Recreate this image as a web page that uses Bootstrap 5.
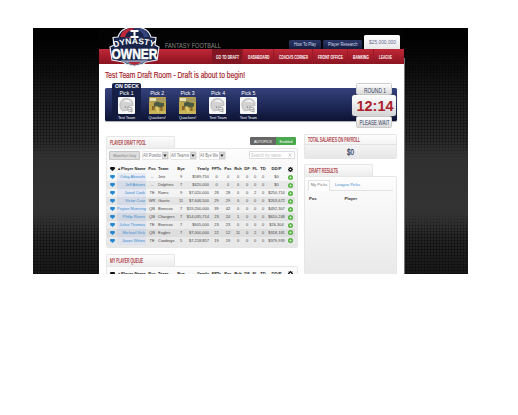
<!DOCTYPE html>
<html lang="en">
<head>
<meta charset="utf-8">
<title>Dynasty Owner - Draft Room</title>
<link href="https://cdn.jsdelivr.net/npm/bootstrap@5.3.0/dist/css/bootstrap.min.css" rel="stylesheet">
<style>
body{background:#fff;font-family:"Liberation Sans",Arial,sans-serif;font-size:4px;line-height:1;color:#444;overflow:hidden}
svg{display:block;overflow:visible}
svg text{font-family:"Liberation Sans",Arial,sans-serif}
.stage{position:relative;width:435px;height:246px;margin:28px 0 0 33px;padding:0 64px 0 66px;overflow:hidden;
background:radial-gradient(circle at 1.5px 1.5px,rgba(0,0,0,.55) .8px,transparent 1.2px) 0 28px/3px 3px,linear-gradient(#000 0,#040404 20px,#171717 60px,#242424 95px,#323232 140px,#323232 182px,#202020 220px,#191919 246px)}
.glow{position:absolute;left:0;right:0;top:112px;height:95px;background:linear-gradient(transparent,#303030 18px,#333 70px,transparent)}
.room{position:relative;height:246px;background:linear-gradient(transparent 22px,#fff 22px);box-shadow:1px 30px 0 #777}
.masthead{height:22px;background:#030303}
.brand{position:absolute;left:9px;top:-4px;z-index:2}
.tagline{margin:12px 0 0 66px;width:57px}
.toplink{height:9px;background:linear-gradient(#2b3768,#151c3e);border-radius:1.5px 1.5px 0 0;margin-right:2px}
.bank{width:36px;height:14px;background:linear-gradient(#fff,#e9e9e9);border-radius:1.5px 1.5px 0 0;margin-right:4px}
.mainnav{height:15px;background:linear-gradient(#be2938,#a51c2b 50%,#8c1522);padding-left:113px}
.mainnav a{height:15px;color:#fff;border-right:1px solid #9a1928;text-decoration:none}
.mainnav a.active{background:#821724}
.mainnav a:last-child{border:0}
.deck{height:33px;margin:0 7px 0 6px;background:linear-gradient(#35427a,#1e2858 55%,#0d1333);border-radius:1.5px;box-shadow:0 1px 1px #aaa;padding-left:7px;color:#fff}
.pick{width:30.4px;height:38px;margin-top:-5px;padding-top:8px;font-size:5.2px}
.pick small{font-size:3.8px;line-height:4px;margin-top:1.5px}
.pick.first{width:29px;height:37px;margin-right:1px;background:linear-gradient(#18224a,#111a3c);border-radius:2px 2px 0 0;padding-top:1px}
.pick.first .ondeck{margin-bottom:2px}
.thumb{width:17px;height:17px;margin-top:.8px}
.clock{position:absolute;left:253px;top:55px;width:44px}
.plate{width:36px;height:12px;background:linear-gradient(#fff,#dadada);border:.5px solid #ccc;border-radius:1.5px}
.timebox{width:44px;height:21px;background:linear-gradient(#fff,#d5d5d5);border-radius:2.5px;box-shadow:0 0 1px #888;z-index:1}
.boards{padding:13px 0 0 7px}
.pool{width:192px;padding-top:2px}
.side{width:93px;margin-left:6px}
.tabhead{width:69px;height:12px;padding:3.4px 0 0 3px;background:linear-gradient(#fcfcfc,#ededed);border:1px solid #e6e6e6;border-bottom:0;border-radius:2px 2px 0 0}
.panelbox{background:linear-gradient(#fdfdfd,#e7e7e7);border:1px solid #e6e6e6;border-radius:0 2px 2px 2px}
.poolbox{height:100px}
.queuebox{height:30px;padding-top:3px}
.queuetab{margin-top:6px}
.resultstab{margin-top:5px}
.paybox{height:25px}
.resultbox{height:110px}
.toggle{width:46px;height:8px;border-radius:1px;overflow:hidden;margin:1px 2px 0 0;background:linear-gradient(90deg,#666 26px,#49a84e 26px)}
.filters{height:9px;margin:2px 2px 5.5px}
.watch{width:31px;height:9px;background:#dedede;border:1px solid #c4c4c4;border-radius:1px}
.pickfield{height:9px;width:27px;border:1px solid #e6e6e6;background:#fff;border-radius:1px;margin-left:1.7px}
.search{width:46px;height:8px;border:1px solid #ddd;background:#fff;border-radius:1px}
.grid{width:188px;table-layout:fixed;border-collapse:collapse;font-size:4px;line-height:4px;margin:0}
.grid th,.grid td{padding:0;height:7.95px;text-align:center;white-space:nowrap;vertical-align:middle}
.grid th{color:#222;font-size:4.1px}
.grid tbody tr:nth-child(even){background:rgba(0,0,0,.05)}
.grid td:nth-child(2){color:#3c8ccd;background:rgba(205,218,245,.4)}
.grid tbody tr:nth-child(even) td:nth-child(2){background:rgba(190,203,230,.45)}
.grid .r{text-align:right;padding-right:1px}
.grid .l{text-align:left}
.grid svg{margin:auto}
.payhead{height:10px;padding:1.6px 0 0 2.5px;border-bottom:1px solid #e2e2e2}
.minitabs{height:11px;margin:3px 3px 0;border-bottom:1px solid #e2e2e2;font-size:4.2px}
.minitabs .on{width:22px;height:11px;border:1px solid #e2e2e2;border-bottom:0;background:#fff;color:#777;border-radius:1px 1px 0 0}
.minitabs .off{margin-left:5px;color:#3c8ccd}
.picklist{padding:5.5px 0 0 4px;font-size:4.2px;color:#333}
.picklist .pos{width:35.5px}
</style>
</head>
<body>
<svg width="0" height="0" class="position-absolute">
<defs>
<symbol id="helmet" viewBox="0 0 17 17"><rect width="17" height="17" rx="1" fill="#f8f8f8"/><path d="M2 9C1 4.500 5 1 9 1.500c4.300.3 6.500 3.500 6 7L10 9.500l-.5 3.500L4.500 14Q2 12 2 9Z" fill="#d2d2d2" stroke="#9a9a9a" stroke-width=".5"/><path d="M5 5q2-2.500 5-2 2.500.5 3 3-4-2-8-1Z" fill="#f4f4f4"/><path d="M9.500 10l4.500 1v4l-4.500-1.500M9.500 12l4.500 1" stroke="#888" stroke-width=".7" fill="none"/><circle cx="7.500" cy="10" r=".8" fill="#888"/></symbol>
<symbol id="photo" viewBox="0 0 17 17"><rect width="17" height="17" rx="1" fill="#bfa44a"/><path d="M0 1h17v4H0z" fill="#a79a5c"/><path d="M1 1h6v3H1z" fill="#e5e0b4"/><path d="M5 6l3-1.500 3 1 4 .5v3l-3 2-4-2-3 2z" fill="#4b5a42"/><path d="M3 9h2.500v4H3zM11.500 10h2v4h-2z" fill="#8a6428"/><path d="M0 14h17v3H0z" fill="#c9b65c"/><path d="M6 9l3 2 1 4-2-1z" fill="#e8cf74"/></symbol>
<symbol id="heart" viewBox="0 0 5 4"><path d="M2.500 4L.2 1.900C-.3 1 .3 0 1.300 0h2.400C4.700 0 5.300 1 4.800 1.900Z"/></symbol>
<symbol id="plus" viewBox="0 0 5 5"><circle cx="2.500" cy="2.500" r="2.500" fill="#55b13e"/><path d="M1.300 2.500h2.400M2.500 1.300v2.400" stroke="#e8f7e4" stroke-width=".7"/></symbol>
<symbol id="gear" viewBox="0 0 5 5"><circle cx="2.500" cy="2.500" r="1.500" fill="none" stroke="#111" stroke-width="1.300"/><path d="M2.500 0v1M2.500 4v1M0 2.500h1M4 2.500h1M.7.7l.7.7M3.600 3.600l.7.7M.7 4.300l.7-.7M3.600 1.400l.7-.7" stroke="#111" stroke-width=".8"/></symbol>
<symbol id="drop" viewBox="0 0 6 7"><rect x=".3" y=".3" width="5.400" height="6.400" rx=".5" fill="#ddd" stroke="#aaa" stroke-width=".5"/><path d="M1.400 2.500h3.200L3 5Z" fill="#222"/></symbol>
</defs>
</svg>
<main class="stage">
<div class="glow"></div>
<div class="room d-flex flex-column">
  <svg class="brand" width="53" height="42" viewBox="0 0 53 42">
    <path d="M10 13Q13 3 26.500 3T43 13L48 13.500 47 21l4 2-2 13-11 2-3 2-8.500 2L18 40l-3-2-11-2L2 23l4-2-1-7.500Z" fill="#172348" stroke="#e7e9f0" stroke-width="1.200"/>
    <path d="M12 13Q14 4 26.500 4V14Z" fill="#c02538"/><path d="M26.500 4Q39 4 41 13l-14.500 1Z" fill="#33447e"/>
    <path d="M17 13Q18 7 26.500 5 35 7 36 13Z" fill="#172348"/>
    <path d="M22.500 7h8M22.500 13h8M26.500 7v6" stroke="#fff" stroke-width="2" fill="none"/>
    <path id="arch" d="M6 23.500Q26.500 16.500 47 23.500" fill="none"/>
    <text font-size="8.500" font-weight="700" fill="#fff" textLength="41" lengthAdjust="spacingAndGlyphs"><textPath href="#arch">DYNASTY</textPath></text>
    <text x="3.500" y="34.500" font-size="14" font-weight="700" fill="#fff" stroke="#fff" stroke-width=".5" textLength="46" lengthAdjust="spacingAndGlyphs">OWNER</text>
    <path d="M12 36.200h29l-5 2-2 1-7.500 2-7.500-2-2-1Z" fill="#8f9ab8"/><path d="M20 38h13l-2 1.500-4.500 1.500-4.500-1.500Z" fill="#b22637"/>
  </svg>
  <header class="masthead d-flex align-items-start">
    <div class="tagline"><svg width="57" height="9"><text x="0" y="7.800" font-size="8" fill="#858585" textLength="56" lengthAdjust="spacingAndGlyphs">FANTASY FOOTBALL</text></svg></div>
    <div class="d-flex align-items-end ms-auto align-self-end">
      <div class="toplink d-flex align-items-center"><svg width="32" height="5"><text x="5" y="4.200" font-size="5" fill="#d5daee" textLength="22" lengthAdjust="spacingAndGlyphs">How To Play</text></svg></div>
      <div class="toplink d-flex align-items-center"><svg width="39" height="5"><text x="5" y="4.200" font-size="5" fill="#d5daee" textLength="29.500" lengthAdjust="spacingAndGlyphs">Player Research</text></svg></div>
      <div class="bank d-flex align-items-center"><svg width="36" height="6"><text x="5" y="4.800" font-size="5.400" fill="#60678c" textLength="27" lengthAdjust="spacingAndGlyphs">$25,000,000</text></svg></div>
    </div>
  </header>
  <nav class="mainnav d-flex">
    <a class="active" href="#"><svg width="30" height="15"><text x="4" y="9.500" font-size="4.500" font-weight="700" fill="#fff" textLength="23" lengthAdjust="spacingAndGlyphs">GO TO DRAFT</text></svg></a>
    <a href="#"><svg width="30" height="15"><text x="5" y="9.500" font-size="4.500" font-weight="700" fill="#fff" textLength="21.500" lengthAdjust="spacingAndGlyphs">DASHBOARD</text></svg></a>
    <a href="#"><svg width="38" height="15"><text x="5" y="9.500" font-size="4.500" font-weight="700" fill="#fff" textLength="29" lengthAdjust="spacingAndGlyphs">COACH'S CORNER</text></svg></a>
    <a href="#"><svg width="34" height="15"><text x="5" y="9.500" font-size="4.500" font-weight="700" fill="#fff" textLength="25" lengthAdjust="spacingAndGlyphs">FRONT OFFICE</text></svg></a>
    <a href="#"><svg width="25" height="15"><text x="5" y="9.500" font-size="4.500" font-weight="700" fill="#fff" textLength="16" lengthAdjust="spacingAndGlyphs">BANKING</text></svg></a>
    <a href="#"><svg width="23" height="15"><text x="5" y="9.500" font-size="4.500" font-weight="700" fill="#fff" textLength="13" lengthAdjust="spacingAndGlyphs">LEAGUE</text></svg></a>
  </nav>
  <svg class="flex-shrink-0" width="305" height="24"><text x="6" y="14" font-size="9.800" fill="#a51c2a" stroke="#a51c2a" stroke-width=".2" textLength="140" lengthAdjust="spacingAndGlyphs">Test Team Draft Room - Draft is about to begin!</text></svg>
  <section class="deck d-flex flex-shrink-0">
    <div class="pick first d-flex flex-column align-items-center"><svg class="ondeck" width="24" height="5"><text x="0" y="4.200" font-size="5" font-weight="700" fill="#fff" textLength="24" lengthAdjust="spacingAndGlyphs">ON DECK</text></svg><span>Pick 1</span><svg class="thumb"><use href="#helmet"/></svg><small>Test Team</small></div>
    <div class="pick d-flex flex-column align-items-center"><span>Pick 2</span><svg class="thumb"><use href="#photo"/></svg><small>Quackers!</small></div>
    <div class="pick d-flex flex-column align-items-center"><span>Pick 3</span><svg class="thumb"><use href="#photo"/></svg><small>Quackers!</small></div>
    <div class="pick d-flex flex-column align-items-center"><span>Pick 4</span><svg class="thumb"><use href="#helmet"/></svg><small>Test Team</small></div>
    <div class="pick d-flex flex-column align-items-center"><span>Pick 5</span><svg class="thumb"><use href="#helmet"/></svg><small>Test Team</small></div>
  </section>
  <div class="clock d-flex flex-column align-items-center">
    <div class="plate"><svg width="35" height="12"><text x="7" y="8.700" font-size="7.800" fill="#303b61" textLength="22" lengthAdjust="spacingAndGlyphs">ROUND 1</text></svg></div>
    <div class="timebox"><svg width="44" height="21"><text x="4.500" y="16" font-size="15.500" font-weight="700" fill="#ab1d2c" textLength="37" lengthAdjust="spacingAndGlyphs">12:14</text></svg></div>
    <div class="plate"><svg width="35" height="12"><text x="2.500" y="8.400" font-size="7.800" fill="#303b61" textLength="30" lengthAdjust="spacingAndGlyphs">PLEASE WAIT</text></svg></div>
  </div>
  <div class="boards d-flex">
    <section class="pool">
      <div class="d-flex justify-content-between">
        <div class="tabhead"><svg width="40" height="7"><text x="0" y="5.400" font-size="6.500" fill="#a51c2a" stroke="#a51c2a" stroke-width=".15" textLength="36" lengthAdjust="spacingAndGlyphs">PLAYER DRAFT POOL</text></svg></div>
        <div class="toggle"><svg width="46" height="8"><text x="4" y="5.500" font-size="4.400" fill="#fff" textLength="18" lengthAdjust="spacingAndGlyphs">AUTOPICK</text><text x="29.500" y="5.500" font-size="4.400" fill="#fff" textLength="13" lengthAdjust="spacingAndGlyphs">Enabled</text></svg></div>
      </div>
      <div class="panelbox poolbox">
        <div class="filters d-flex align-items-start">
          <div class="watch"><svg width="29" height="7"><text x="3" y="5" font-size="4.300" fill="#777" textLength="23" lengthAdjust="spacingAndGlyphs">Watchlist Only</text></svg></div>
          <div class="pickfield"><svg width="25" height="7"><text x="0" y="5.100" font-size="4.800" fill="#777" textLength="18" lengthAdjust="spacingAndGlyphs">All Positio</text><use href="#drop" x="19" y="0" width="6" height="7"/></svg></div>
          <div class="pickfield"><svg width="25" height="7"><text x="0" y="5.100" font-size="4.800" fill="#777" textLength="18" lengthAdjust="spacingAndGlyphs">All Teams</text><use href="#drop" x="19" y="0" width="6" height="7"/></svg></div>
          <div class="pickfield"><svg width="25" height="7"><text x="0" y="5.100" font-size="4.800" fill="#777" textLength="18" lengthAdjust="spacingAndGlyphs">All Bye We</text><use href="#drop" x="19" y="0" width="6" height="7"/></svg></div>
          <div class="search ms-auto"><svg width="44" height="6"><text x="1" y="4.600" font-size="4.600" fill="#c2c2c2" textLength="30" lengthAdjust="spacingAndGlyphs">Search by name</text><path d="M38.500 1.500l3 3m0-3l-3 3" stroke="#bbb" stroke-width=".7"/></svg></div>
        </div>
        <table class="grid" id="pool"></table>
      </div>
      <div class="tabhead queuetab"><svg width="40" height="7"><text x="0" y="5.400" font-size="6.500" fill="#a51c2a" stroke="#a51c2a" stroke-width=".15" textLength="33" lengthAdjust="spacingAndGlyphs">MY PLAYER QUEUE</text></svg></div>
      <div class="panelbox queuebox"><table class="grid" id="queue"></table></div>
    </section>
    <aside class="side">
      <div class="panelbox paybox">
        <div class="payhead"><svg width="60" height="7"><text x="0" y="5.400" font-size="6.500" fill="#a51c2a" stroke="#a51c2a" stroke-width=".15" textLength="52" lengthAdjust="spacingAndGlyphs">TOTAL SALARIES ON PAYROLL</text></svg></div>
        <svg width="91" height="12"><text x="42" y="10.300" font-size="9" fill="#303b61" stroke="#303b61" stroke-width=".25" textLength="7" lengthAdjust="spacingAndGlyphs">$0</text></svg>
      </div>
      <div class="tabhead resultstab"><svg width="40" height="7"><text x="1" y="5.400" font-size="6.500" fill="#a51c2a" stroke="#a51c2a" stroke-width=".15" textLength="29" lengthAdjust="spacingAndGlyphs">DRAFT RESULTS</text></svg></div>
      <div class="panelbox resultbox">
        <div class="minitabs d-flex align-items-center"><span class="on d-flex align-items-center justify-content-center">My Picks</span><span class="off">League Picks</span></div>
        <div class="picklist d-flex fw-bold"><span class="pos">Pos</span><span>Player</span></div>
      </div>
    </aside>
  </div>
</div>
</main>
<script src="https://cdn.jsdelivr.net/npm/bootstrap@5.3.0/dist/js/bootstrap.bundle.min.js"></script>
<script>
const widths=[10,29,12,18,10,24,13,10,10,8,8,8,19,9];
const align=['','r','','l','','r','','','','','','','',''];
const icon=(id,w,h,c)=>`<svg width="${w}" height="${h}" fill="${c}"><use href="#${id}"/></svg>`;
const cols='<colgroup>'+widths.map(w=>`<col style="width:${w}px">`).join('')+'</colgroup>';
const row=(cells,tag)=>'<tr>'+cells.map((c,i)=>`<${tag} class="${align[i]}">${c}</${tag}>`).join('')+'</tr>';
const head='<thead>'+row([icon('heart',5,4,'#111'),'▲Player Name','Pos','Team','Bye','Yearly','FPTs','Pas','Rsh','DF','FL','TD','DD/P',icon('gear',5,5,'')],'th')+'</thead>';
const players=[
['Oday Aboushi','--','Jets',9,'$589,750',0,0,0,0,0,0,'$0'],
['Jeff Adams','--','Dolphins',7,'$420,000',0,0,0,0,0,0,'$0'],
['Jared Cook','TE','Rams',9,'$7,020,000',28,28,0,0,2,0,'$250,714'],
['Victor Cruz','WR','Giants',11,'$7,646,500',29,29,0,0,0,0,'$263,672'],
['Peyton Manning','QB','Broncos',7,'$19,200,000',39,42,0,0,0,0,'$492,307'],
['Philip Rivers','QB','Chargers',7,'$14,035,714',23,24,1,0,0,0,'$610,248'],
['Julius Thomas','TE','Broncos',7,'$605,000',23,23,0,0,0,0,'$26,304'],
['Michael Vick','QB','Eagles',7,'$7,000,000',22,12,11,0,2,0,'$318,181'],
['Jason Witten','TE','Cowboys',5,'$7,218,857',19,19,0,0,0,0,'$379,939']];
document.getElementById('pool').innerHTML=cols+head+'<tbody>'+players.map(p=>row([icon('heart',5,4,'#2489d2'),...p,icon('plus',5,5,'')],'td')).join('')+'</tbody>';
document.getElementById('queue').innerHTML=cols+head;
</script>
</body>
</html>
